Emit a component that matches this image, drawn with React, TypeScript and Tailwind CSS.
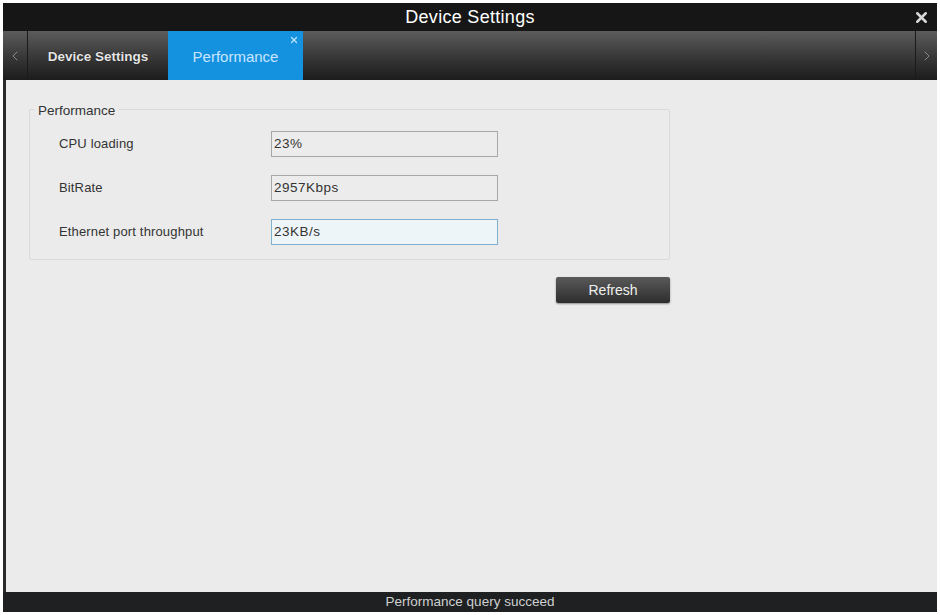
import { X, ChevronLeft, ChevronRight } from 'lucide-react';

const rows = [
  { label: 'CPU loading', value: '23%', active: false },
  { label: 'BitRate', value: '2957Kbps', active: false },
  { label: 'Ethernet port throughput', value: '23KB/s', active: true },
];

export default function App() {
  return (
    <div className="w-[940px] h-[615px] bg-white p-[3px] font-['Liberation_Sans',Arial,sans-serif]">
      <div className="flex h-[609px] flex-col bg-[#ebebeb]">
        {/* 標題列 */}
        <div className="relative flex h-[28px] items-center justify-center bg-[#161616]">
          <span className="text-[18px] tracking-[0.3px] text-white">Device Settings</span>
          <X className="absolute right-[7px] top-[6px] text-[#d8d8d8]" size={17} strokeWidth={3.5} />
        </div>

        {/* 分頁列 */}
        <div className="flex h-[49px] bg-gradient-to-b from-[#5c5c5c] via-[#3a3a3a] to-[#1c1c1c]">
          <div className="flex w-[25px] items-center justify-center border-r border-[#1a1a1a]">
            <ChevronLeft className="text-[#8a8a8a]" size={16} strokeWidth={1.5} />
          </div>
          <div className="flex w-[140px] items-center justify-center pt-[3px]">
            <span className="text-[13.5px] font-bold text-[#e6e6e6] [text-shadow:0_0_1px_#000]">Device Settings</span>
          </div>
          <div className="relative flex w-[135px] items-center justify-center bg-[#1592df] pt-[3px]">
            <span className="text-[15px] text-[#c9e6ff]">Performance</span>
            <X className="absolute right-[4px] top-[4px] text-[#bfe0ff]" size={10} strokeWidth={3} />
          </div>
          <div className="flex-1" />
          <div className="flex w-[22px] items-center justify-center border-l border-[#1a1a1a]">
            <ChevronRight className="text-[#8a8a8a]" size={16} strokeWidth={1.5} />
          </div>
        </div>

        {/* 內容區 */}
        <div className="flex-1 border-l-[3px] border-[#2a2a2a] pl-[23px] pt-[29px]">
          <div className="relative w-[641px] rounded-[2px] border border-[#dadada] pb-[14px] pt-[18px]">
            <span className="absolute left-[4px] top-[-9px] bg-[#ebebeb] px-[4px] text-[13.5px] text-[#333]">Performance</span>
            <div className="flex flex-col gap-[18px] pt-[3px]">
              {rows.map((row) => (
                <div key={row.label} className="flex items-center">
                  <span className="w-[241px] pl-[29px] text-[13px] tracking-[0.15px] text-[#333]">{row.label}</span>
                  <div
                    className={
                      row.active
                        ? 'flex h-[26px] w-[227px] items-center border border-[#7fb0cc] bg-[#eef5f9] px-[2px] text-[13.5px] tracking-[0.5px] text-[#333]'
                        : 'flex h-[26px] w-[227px] items-center border border-[#a8a8a8] bg-[#ececec] px-[2px] text-[13.5px] tracking-[0.5px] text-[#333]'
                    }
                  >
                    {row.value}
                  </div>
                </div>
              ))}
            </div>
          </div>
          <div className="flex w-[641px] justify-end pt-[17px]">
            <button className="h-[26px] w-[114px] rounded-[2px] bg-gradient-to-b from-[#5a5a5a] to-[#2e2e2e] text-[14px] text-[#f0f0f0] shadow-[0_1px_2px_rgba(0,0,0,0.4)]">
              Refresh
            </button>
          </div>
        </div>

        {/* 狀態列 */}
        <div className="flex h-[20px] items-center justify-center bg-[#1e2022]">
          <span className="text-[13.5px] text-[#d0d0d0]">Performance query succeed</span>
        </div>
      </div>
    </div>
  );
}
